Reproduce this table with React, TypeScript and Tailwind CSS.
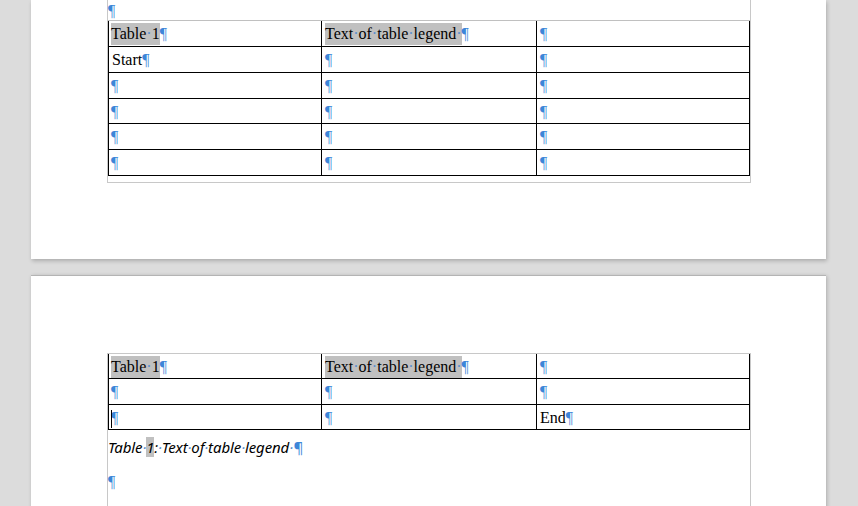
import React from "react";

const serif = "font-['Liberation_Serif','Times_New_Roman',serif]";

function Pil() {
  return <span className="text-[#3d86d8]">¶</span>;
}

function Dot() {
  return <span className="text-[#5b8fcf]">·</span>;
}

function Hl({ children }: { children: React.ReactNode }) {
  return <span className="bg-[#c0c0c0] inline-block h-[22px] leading-[22px]">{children}</span>;
}

const cellCls = [
  "w-[214px] border-x border-black pl-[2px]",
  "w-[215px] border-r border-black pl-[3px]",
  "w-[213px] border-r border-black pl-[3px]",
];

function Row({ h, cells, cursor }: { h: number; cells: React.ReactNode[]; cursor?: boolean }) {
  return (
    <div className="flex border-b border-black box-border" style={{ height: h }}>
      {cells.map((c, i) => (
        <div key={i} className={"h-full pt-[2px] leading-[22px] " + cellCls[i]}>
          <span className="inline-block h-[22px] leading-[22px] relative align-top">
            {cursor && i === 0 && <span className="absolute left-[0px] top-[3px] w-px h-[18px] bg-black" />}
            {c}
            <Pil />
          </span>
        </div>
      ))}
    </div>
  );
}

const head = [
  <Hl key="a">
    Table<Dot />1
  </Hl>,
  <Hl key="b">
    Text<Dot />of<Dot />table<Dot />legend<Dot />
  </Hl>,
  "",
];

export default function App() {
  return (
    <div className="w-[858px] h-[506px] overflow-hidden bg-[#dcdcdc] flex flex-col">
      {/* page 1, scrolled so only its lower part shows */}
      <div className="ml-[31px] w-[795px] h-[259px] shrink-0 bg-white shadow-[1px_2px_4px_rgba(0,0,0,0.22)]">
        <div className="ml-[76px] w-[644px] h-[183px] border-x border-b border-[#c8c8c8]">
          <div className={"h-[20px] leading-[22px] text-[16px] " + serif}>
            <Pil />
          </div>
          <div className={"border-t border-[#c0c0c0] text-[16px] text-black " + serif}>
            <Row h={26} cells={head} />
            <Row h={26} cells={[<span key="s" className="pl-[1px]">Start</span>, "", ""]} />
            <Row h={26} cells={["", "", ""]} />
            <Row h={25} cells={["", "", ""]} />
            <Row h={26} cells={["", "", ""]} />
            <Row h={26} cells={["", "", ""]} />
          </div>
        </div>
      </div>

      {/* page 2 */}
      <div className="mt-[16px] ml-[31px] w-[795px] h-[260px] shrink-0 bg-white border-t border-[#b4b4b4] shadow-[1px_1px_4px_rgba(0,0,0,0.22)]">
        <div className="mt-[77px] ml-[76px] w-[644px] h-[200px] border-x border-t border-[#c8c8c8]">
          <div className={"text-[16px] text-black " + serif}>
            <Row h={25} cells={head} />
            <Row h={26} cells={["", "", ""]} />
            <Row h={25} cells={["", "", "End"]} cursor />
          </div>
          <div className="pt-[6px] h-[30px] leading-[22px] text-[15px] tracking-[-0.1px] italic text-black font-['Noto_Sans','Open_Sans',sans-serif]">
            Table<Dot />
            <span className="bg-[#c0c0c0]">1</span>:<Dot />Text<Dot />of<Dot />table<Dot />legend<Dot />
            <Pil />
          </div>
          <div className={"pt-[11px] leading-[22px] text-[16px] " + serif}>
            <Pil />
          </div>
        </div>
      </div>
    </div>
  );
}
